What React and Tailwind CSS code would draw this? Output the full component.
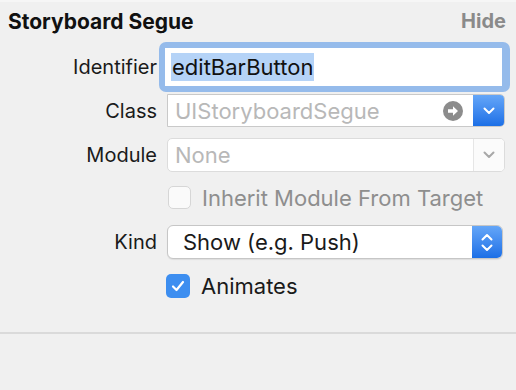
import React from "react";

const font = { fontFamily: "Inter, 'Liberation Sans', sans-serif" };

const Chevron = ({ stroke = "white" }) => (
  <svg width="12" height="8" viewBox="0 0 12 8">
    <path d="M1.5 1.5 L6 6 L10.5 1.5" fill="none" stroke={stroke} strokeWidth="2" strokeLinecap="round" strokeLinejoin="round" />
  </svg>
);

const Label = ({ children }) => (
  <div className="w-[157px] shrink-0 text-right text-[20px] leading-none text-[#1a1a1a]">{children}</div>
);

export default function App() {
  return (
    <div className="w-[516px] h-[390px] bg-[#f0f0f0] border-t-2 border-[#f6f6f6] overflow-hidden" style={font}>
      {/* header */}
      <div className="flex items-center justify-between pl-[8px] pr-[10px] h-[38px]">
        <span className="text-[21px] leading-none font-bold text-[#111]">Storyboard Segue</span>
        <span className="text-[20px] leading-none font-bold text-[#8a8a8a]">Hide</span>
      </div>

      {/* Identifier */}
      <div className="flex items-center h-[50px] mt-[2px]">
        <Label>Identifier</Label>
        <div className="ml-[2px] w-[351px] h-[50px] rounded-[7px] bg-[#95bbeb] p-[6px] pr-[8px]">
          <div className="h-full bg-white flex items-center pl-[6px]">
            <span className="bg-[#b5d3f7] text-[22px] text-[#111] leading-[28px] px-[1px]">editBarButton</span>
          </div>
        </div>
      </div>

      {/* Class */}
      <div className="flex items-center h-[33px] mt-[2px]">
        <Label>Class</Label>
        <div className="ml-[10px] w-[338px] h-[33px] flex bg-white border border-[#c9c9c9] rounded-r-[5px] overflow-hidden">
          <div className="flex-1 flex items-center pl-[7px] text-[22px] leading-none text-[#b8b8b8]">UIStoryboardSegue</div>
          <div className="w-[40px] flex items-center justify-center">
            <svg width="20" height="20" viewBox="0 0 20 20">
              <circle cx="10" cy="10" r="10" fill="#8c8c8c" />
              <path d="M5 8.3 H10 V5.2 L15 10 L10 14.8 V11.7 H5 Z" fill="white" />
            </svg>
          </div>
          <div className="w-[31px] flex items-center justify-center bg-gradient-to-b from-[#64a6f8] to-[#1b6fe6]">
            <Chevron />
          </div>
        </div>
      </div>

      {/* Module */}
      <div className="flex items-center h-[34px] mt-[11px]">
        <Label>Module</Label>
        <div className="ml-[10px] w-[338px] h-[34px] flex bg-white border border-[#dcdcdc] rounded-[5px] overflow-hidden">
          <div className="flex-1 flex items-center pl-[7px] text-[22px] leading-none text-[#b8b8b8]">None</div>
          <div className="w-[31px] flex items-center justify-center border-l border-[#e6e6e6] bg-[#fbfbfb]">
            <Chevron stroke="#a8a8a8" />
          </div>
        </div>
      </div>

      {/* Inherit */}
      <div className="flex items-center h-[23px] mt-[14px] pl-[168px]">
        <div className="w-[23px] h-[23px] rounded-[5px] border border-[#d6d6d6] bg-[#fafafa]" />
        <span className="ml-[11px] text-[22px] leading-none text-[#8e8e8e]">Inherit Module From Target</span>
      </div>

      {/* Kind */}
      <div className="flex items-center h-[34px] mt-[16px]">
        <Label>Kind</Label>
        <div className="ml-[10px] w-[336px] h-[34px] flex bg-white border border-[#c6c6c6] rounded-[6px] overflow-hidden shadow-[0_1px_1px_rgba(0,0,0,0.08)]">
          <div className="flex-1 flex items-center pl-[15px] text-[22px] leading-none text-[#1a1a1a]">Show (e.g. Push)</div>
          <div className="w-[30px] flex flex-col items-center justify-center gap-[3px] bg-gradient-to-b from-[#64a6f8] to-[#1b6fe6]">
            <svg width="12" height="8" viewBox="0 0 12 8">
              <path d="M1.5 6.5 L6 2 L10.5 6.5" fill="none" stroke="white" strokeWidth="2" strokeLinecap="round" strokeLinejoin="round" />
            </svg>
            <Chevron />
          </div>
        </div>
      </div>

      {/* Animates */}
      <div className="flex items-center h-[24px] mt-[15px] pl-[166px]">
        <div className="w-[24px] h-[24px] rounded-[5px] bg-[#3d8ef0] flex items-center justify-center">
          <svg width="14" height="12" viewBox="0 0 14 12">
            <path d="M2 6.5 L5.5 10 L12 2" fill="none" stroke="white" strokeWidth="2.2" strokeLinecap="round" strokeLinejoin="round" />
          </svg>
        </div>
        <span className="ml-[11px] text-[22px] leading-none text-[#1a1a1a]">Animates</span>
      </div>

      <div className="mt-[34px] h-[2px] bg-[#dadada]" />
    </div>
  );
}
